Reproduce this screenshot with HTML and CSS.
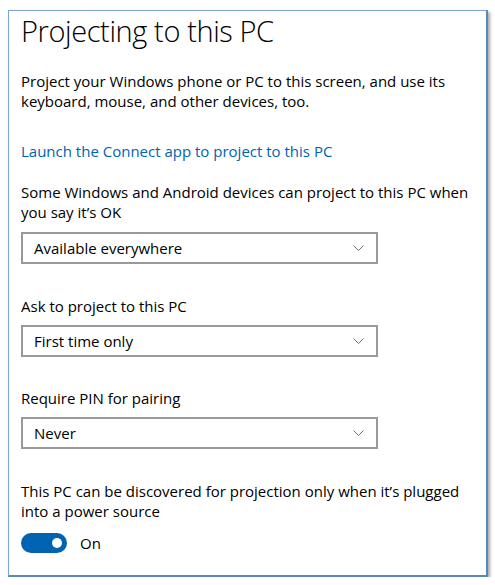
FILE: index.html
```html
<!DOCTYPE html>
<html lang="en">
<head>
<meta charset="utf-8">
<title>Projecting to this PC</title>
<link rel="stylesheet" href="styles.css">
</head>
<body>
<div class="frame">
  <h1 class="title">Projecting to this PC</h1>
  <p class="desc">Project your Windows phone or PC to this screen, and use its keyboard, mouse, and other devices, too.</p>
  <a class="link" href="#">Launch the Connect app to project to this PC</a>

  <div class="setting first">
    <p class="label">Some Windows and Android devices can project to this PC when you say it’s OK</p>
    <div class="select"><span>Available everywhere</span><svg class="chev" width="11" height="6" viewBox="0 0 11 6"><path d="M0.5 0.5 L5.5 5.5 L10.5 0.5" fill="none" stroke="#6e6e6e" stroke-width="1"/></svg></div>
  </div>

  <div class="setting">
    <p class="label">Ask to project to this PC</p>
    <div class="select"><span>First time only</span><svg class="chev" width="11" height="6" viewBox="0 0 11 6"><path d="M0.5 0.5 L5.5 5.5 L10.5 0.5" fill="none" stroke="#6e6e6e" stroke-width="1"/></svg></div>
  </div>

  <div class="setting third">
    <p class="label">Require PIN for pairing</p>
    <div class="select"><span>Never</span><svg class="chev" width="11" height="6" viewBox="0 0 11 6"><path d="M0.5 0.5 L5.5 5.5 L10.5 0.5" fill="none" stroke="#6e6e6e" stroke-width="1"/></svg></div>
  </div>

  <div class="setting power">
    <p class="label">This PC can be discovered for projection only when it’s plugged into a power source</p>
    <div class="toggle-row">
      <span class="toggle"><span class="knob"></span></span>
      <span class="toggle-text">On</span>
    </div>
  </div>
</div>
</body>
</html>
```
FILE: styles.css
```css
html, body {
  margin: 0;
  padding: 0;
  background: #ffffff;
}
body {
  padding: 10px 0 0 8px;
  font-family: "Open Sans", "Noto Sans", sans-serif;
  color: #000000;
}
.frame {
  box-sizing: border-box;
  width: 480px;
  height: 567px;
  border-top: 1px solid #7ea5da;
  border-left: 1px solid #7ea5da;
  border-right: 2px solid #5886c6;
  border-bottom: 2px solid #5886c6;
  box-shadow: 2px 2px 3px rgba(0, 0, 0, 0.35);
  padding: 2px 0 0 12px;
  display: flex;
  flex-direction: column;
  align-items: flex-start;
}
.title {
  margin: 0;
  font-size: 29px;
  font-weight: 300;
  line-height: 36px;
  letter-spacing: -0.4px;
}
.desc, .label {
  margin: 0;
  font-size: 15px;
  line-height: 20px;
  width: 455px;
}
.desc {
  margin-top: 22px;
}
.link {
  margin-top: 30px;
  font-size: 15px;
  line-height: 20px;
  color: #0063b1;
  text-decoration: none;
}
.setting {
  display: flex;
  flex-direction: column;
  margin-top: 32px;
}
.setting.first {
  margin-top: 21px;
}
.setting.third {
  margin-top: 31px;
}
.setting.power {
  margin-top: 32px;
}
.select {
  box-sizing: border-box;
  margin-top: 9px;
  width: 357px;
  height: 32px;
  border: 2px solid #999999;
  padding: 0 12px 0 11px;
  display: flex;
  align-items: center;
  justify-content: space-between;
  font-size: 15px;
}
.setting.first .select {
  margin-top: 10px;
}
.chev {
  display: block;
}
.toggle-row {
  margin-top: 12px;
  display: flex;
  align-items: center;
  gap: 13px;
  font-size: 15px;
}
.toggle {
  box-sizing: border-box;
  width: 46px;
  height: 20px;
  border-radius: 10px;
  background: #0063b1;
  display: flex;
  align-items: center;
  justify-content: flex-end;
  padding-right: 5px;
}
.knob {
  width: 10px;
  height: 10px;
  border-radius: 50%;
  background: #ffffff;
}
```
